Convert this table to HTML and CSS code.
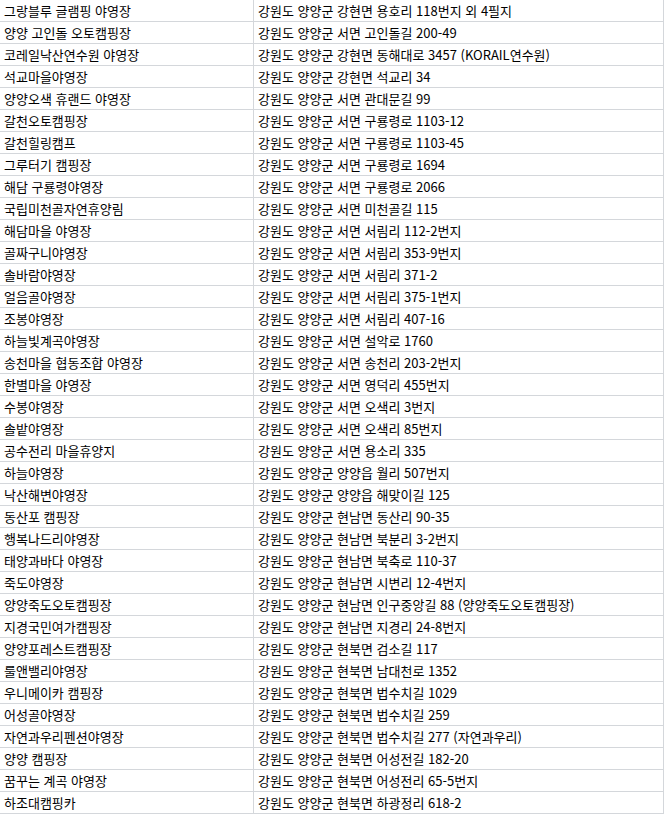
FILE: index.html
```html
<!DOCTYPE html>
<html lang="ko">
<head>
<meta charset="utf-8">
<link rel="stylesheet" href="styles.css">
</head>
<body>
<table class="sheet">
<colgroup><col class="c-name"><col class="c-addr"></colgroup>
<tbody>
<tr><td>그랑블루 글램핑 야영장</td><td>강원도 양양군 강현면 용호리 118번지 외 4필지</td></tr>
<tr><td>양양 고인돌 오토캠핑장</td><td>강원도 양양군 서면 고인돌길 200-49</td></tr>
<tr><td>코레일낙산연수원 야영장</td><td>강원도 양양군 강현면 동해대로 3457 (KORAIL연수원)</td></tr>
<tr><td>석교마을야영장</td><td>강원도 양양군 강현면 석교리 34</td></tr>
<tr><td>양양오색 휴랜드 야영장</td><td>강원도 양양군 서면 관대문길 99</td></tr>
<tr><td>갈천오토캠핑장</td><td>강원도 양양군 서면 구룡령로 1103-12</td></tr>
<tr><td>갈천힐링캠프</td><td>강원도 양양군 서면 구룡령로 1103-45</td></tr>
<tr><td>그루터기 캠핑장</td><td>강원도 양양군 서면 구룡령로 1694</td></tr>
<tr><td>해담 구룡령야영장</td><td>강원도 양양군 서면 구룡령로 2066</td></tr>
<tr><td>국립미천골자연휴양림</td><td>강원도 양양군 서면 미천골길 115</td></tr>
<tr><td>해담마을 야영장</td><td>강원도 양양군 서면 서림리 112-2번지</td></tr>
<tr><td>골짜구니야영장</td><td>강원도 양양군 서면 서림리 353-9번지</td></tr>
<tr><td>솔바람야영장</td><td>강원도 양양군 서면 서림리 371-2</td></tr>
<tr><td>얼음골야영장</td><td>강원도 양양군 서면 서림리 375-1번지</td></tr>
<tr><td>조봉야영장</td><td>강원도 양양군 서면 서림리 407-16</td></tr>
<tr><td>하늘빛계곡야영장</td><td>강원도 양양군 서면 설악로 1760</td></tr>
<tr><td>송천마을 협동조합 야영장</td><td>강원도 양양군 서면 송천리 203-2번지</td></tr>
<tr><td>한별마을 야영장</td><td>강원도 양양군 서면 영덕리 455번지</td></tr>
<tr><td>수봉야영장</td><td>강원도 양양군 서면 오색리 3번지</td></tr>
<tr><td>솔밭야영장</td><td>강원도 양양군 서면 오색리 85번지</td></tr>
<tr><td>공수전리 마을휴양지</td><td>강원도 양양군 서면 용소리 335</td></tr>
<tr><td>하늘야영장</td><td>강원도 양양군 양양읍 월리 507번지</td></tr>
<tr><td>낙산해변야영장</td><td>강원도 양양군 양양읍 해맞이길 125</td></tr>
<tr><td>동산포 캠핑장</td><td>강원도 양양군 현남면 동산리 90-35</td></tr>
<tr><td>행복나드리야영장</td><td>강원도 양양군 현남면 북분리 3-2번지</td></tr>
<tr><td>태양과바다 야영장</td><td>강원도 양양군 현남면 북축로 110-37</td></tr>
<tr><td>죽도야영장</td><td>강원도 양양군 현남면 시변리 12-4번지</td></tr>
<tr><td>양양죽도오토캠핑장</td><td>강원도 양양군 현남면 인구중앙길 88 (양양죽도오토캠핑장)</td></tr>
<tr><td>지경국민여가캠핑장</td><td>강원도 양양군 현남면 지경리 24-8번지</td></tr>
<tr><td>양양포레스트캠핑장</td><td>강원도 양양군 현북면 검소길 117</td></tr>
<tr><td>룰앤밸리야영장</td><td>강원도 양양군 현북면 남대천로 1352</td></tr>
<tr><td>우니메이카 캠핑장</td><td>강원도 양양군 현북면 법수치길 1029</td></tr>
<tr><td>어성골야영장</td><td>강원도 양양군 현북면 법수치길 259</td></tr>
<tr><td>자연과우리펜션야영장</td><td>강원도 양양군 현북면 법수치길 277 (자연과우리)</td></tr>
<tr><td>양양 캠핑장</td><td>강원도 양양군 현북면 어성전길 182-20</td></tr>
<tr><td>꿈꾸는 계곡 야영장</td><td>강원도 양양군 현북면 어성전리 65-5번지</td></tr>
<tr><td>하조대캠핑카</td><td>강원도 양양군 현북면 하광정리 618-2</td></tr>
</tbody>
</table>
</body>
</html>
```
FILE: styles.css
```css
html, body {
  margin: 0;
  padding: 0;
  background: #ffffff;
}
.sheet {
  border-collapse: collapse;
  table-layout: fixed;
  width: 664px;
  margin: -1px 0 0 -1px;
  font-family: "Noto Sans CJK KR", "Noto Sans", sans-serif;
  font-size: 13px;
  color: #000000;
}
.c-name { width: 254px; }
.c-addr { width: 410px; }
.sheet td {
  height: 21px;
  padding: 0 0 0 4px;
  border: 1px solid #d4d7db;
  white-space: nowrap;
  overflow: hidden;
  line-height: 21px;
  vertical-align: middle;
}
```
